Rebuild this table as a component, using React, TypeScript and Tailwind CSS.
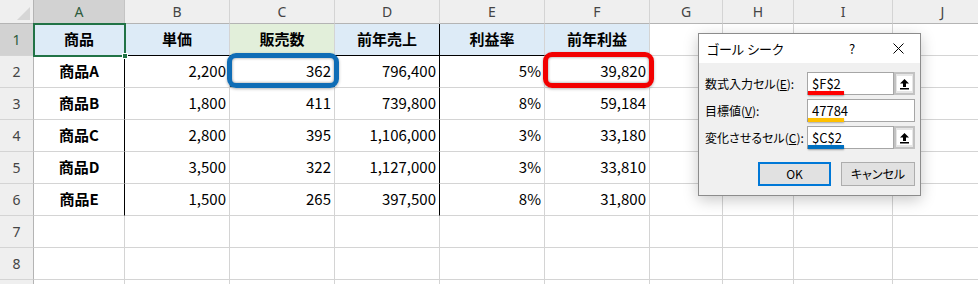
import React from 'react';

const colWidths = ['w-[91px]', 'w-[105px]', 'w-[105px]', 'w-[105px]', 'w-[105px]', 'w-[105px]', 'w-[73px]', 'w-[71px]', 'w-[99px]', 'w-[100px]'];
const colLetters = ['A', 'B', 'C', 'D', 'E', 'F', 'G', 'H', 'I', 'J'];

const headers = ['商品', '単価', '販売数', '前年売上', '利益率', '前年利益'];
const data = [
  ['商品A', '2,200', '362', '796,400', '5%', '39,820'],
  ['商品B', '1,800', '411', '739,800', '8%', '59,184'],
  ['商品C', '2,800', '395', '1,106,000', '3%', '33,180'],
  ['商品D', '3,500', '322', '1,127,000', '3%', '33,810'],
  ['商品E', '1,500', '265', '397,500', '8%', '31,800'],
];

const UploadArrow = () => (
  <svg width="11" height="12" viewBox="0 0 11 12">
    <path d="M5.5 1 L10 5.5 L7 5.5 L7 9 L4 9 L4 5.5 L1 5.5 Z" fill="#000" />
    <rect x="1" y="10" width="9" height="1.5" fill="#000" />
  </svg>
);

const RefInput = ({ value, bar }: { value: string; bar: string }) => (
  <div className="relative flex h-[23px] w-[108px]">
    <div className="flex-1 flex items-center bg-white border border-[#a6a6a6] pl-[4px] text-[13px] text-black">
      {value}
    </div>
    <div className="w-[21px] border-2 border-[#c2c2c2] bg-[#e6e6e6] flex items-center justify-center">
      <div className="w-[15px] h-[15px] bg-white flex items-center justify-center">
        <UploadArrow />
      </div>
    </div>
    <div className={`absolute left-[1px] top-[19px] w-[36px] h-[4px] shadow-[0_1px_2px_rgba(0,0,0,0.35)] ${bar}`} />
  </div>
);

const GoalSeekDialog = () => (
  <div className="absolute left-[698px] top-[33px] w-[223px] h-[163px] border border-[#8c8c8c] bg-[#f0f0f0] shadow-[0_4px_14px_rgba(0,0,0,0.22)] flex flex-col font-['Noto_Sans_CJK_JP',sans-serif] [font-feature-settings:'palt'] text-black">
    {/* title bar */}
    <div className="h-[29px] bg-white flex items-center pl-[8px] text-[13px]">
      <span>ゴール シーク</span>
      <span className="ml-auto w-[14px] text-center text-[13px]">?</span>
      <span className="ml-[32px] mr-[15px] w-[14px] flex items-center justify-center">
        <svg width="11" height="11" viewBox="0 0 11 11">
          <path d="M0.5 0.5 L10.5 10.5 M10.5 0.5 L0.5 10.5" stroke="#000" strokeWidth="1" />
        </svg>
      </span>
    </div>

    <div className="flex flex-col pt-[9px] pl-[6px] pr-[5px] gap-[4px]">
      <div className="flex items-center">
        <span className="w-[102px] text-[12px]">数式入力セル(<span className="underline">E</span>):</span>
        <RefInput value="$F$2" bar="bg-[#ff0000]" />
      </div>
      <div className="flex items-center">
        <span className="w-[102px] text-[12px]">目標値(<span className="underline">V</span>):</span>
        <div className="relative h-[23px] w-[108px] bg-white border border-[#a6a6a6] pl-[4px] flex items-center text-[13px]">
          47784
          <div className="absolute left-0 top-[18px] w-[36px] h-[4px] bg-[#ffc000] shadow-[0_1px_2px_rgba(0,0,0,0.3)]" />
        </div>
      </div>
      <div className="flex items-center">
        <span className="w-[102px] text-[12px]">変化させるセル(<span className="underline">C</span>):</span>
        <RefInput value="$C$2" bar="bg-[#0070c0]" />
      </div>
    </div>

    <div className="flex justify-end gap-[10px] pr-[5px] mt-[13px]">
      <button className="w-[73px] h-[24px] border-2 border-[#0078d7] bg-[#e1e1e1] text-[12px]">OK</button>
      <button className="w-[74px] h-[24px] border border-[#adadad] bg-[#e1e1e1] text-[12px]">キャンセル</button>
    </div>
  </div>
);

export default function App() {
  const rowCount = 9;
  return (
    <div className="relative w-[978px] h-[284px] overflow-hidden bg-white font-['Noto_Sans_CJK_JP',sans-serif] text-black">
      {/* column header row */}
      <div className="flex h-[24px]">
        <div className="w-[34px] shrink-0 bg-[#efefef] border-r border-b border-[#b4b4b4] relative">
          <svg className="absolute right-[3px] bottom-[3px]" width="13" height="13" viewBox="0 0 13 13">
            <polygon points="13,0 13,13 0,13" fill="#d6d6d6" />
          </svg>
        </div>
        {colLetters.map((l, i) => (
          <div
            key={l}
            className={`${colWidths[i]} shrink-0 border-r border-b flex items-center justify-center text-[14px] font-['Noto_Sans',sans-serif] ${
              i === 0 ? 'bg-[#d2d2d2] border-r-[#c4c4c4] border-b-[#9a9a9a] text-[#2d5c3c]' : 'bg-[#efefef] border-r-[#d4d4d4] border-b-[#b4b4b4] text-[#444]'
            }`}
          >
            {l}
          </div>
        ))}
      </div>

      {Array.from({ length: rowCount }).map((_, r) => {
        const rowNo = r + 1;
        return (
          <div key={rowNo} className="flex h-[32px]">
            <div
              className={`w-[34px] shrink-0 border-r border-b border-r-[#b4b4b4] border-b-[#d4d4d4] flex items-center justify-center text-[14px] font-['Noto_Sans',sans-serif] ${
                rowNo === 1 ? 'bg-[#d2d2d2] text-[#2d5c3c]' : 'bg-[#efefef] text-[#444]'
              }`}
            >
              {rowNo < 9 ? rowNo : ''}
            </div>
            {colLetters.map((_, c) => {
              let text = '';
              let bg = '';
              let align = 'justify-end pr-[3px]';
              if (rowNo === 1 && c < 6) {
                text = headers[c];
                bg = c === 2 ? 'bg-[#e2efda]' : 'bg-[#ddebf7]';
                align = 'justify-center font-bold';
              } else if (rowNo >= 2 && rowNo <= 6 && c < 6) {
                text = data[rowNo - 2][c];
                if (c === 0) align = 'justify-center font-bold';
              }
              const inTable = rowNo <= 6;
              const blackRight = inTable && (c === 0 || c === 3);
              const blackBottom = rowNo === 1 && c < 6;
              return (
                <div
                  key={c}
                  className={`${colWidths[c]} shrink-0 border-r border-b flex items-center text-[15px] ${align} ${bg} ${
                    blackRight ? 'border-r-black' : 'border-r-[#d4d4d4]'
                  } ${blackBottom ? 'border-b-black' : 'border-b-[#d4d4d4]'}`}
                >
                  {text}
                </div>
              );
            })}
          </div>
        );
      })}

      {/* active cell A1 */}
      <div className="absolute left-[33px] top-[23px] w-[93px] h-[34px] border-2 border-[#217346]" />
      <div className="absolute left-[122px] top-[53px] w-[6px] h-[6px] bg-[#217346] border border-white" />

      {/* copy marquee on C2 */}
      <div className="absolute left-[230px] top-[85px] w-[105px] border-t-2 border-dashed border-[#1d5f8a]" />

      {/* annotation frames */}
      <div className="absolute left-[227px] top-[53px] w-[112px] h-[35px] rounded-[9px] border-[5px] border-[#0f6db6] shadow-[inset_0_0_3px_rgba(0,0,0,0.45),0_1px_3px_rgba(0,0,0,0.3)]" />
      <div className="absolute left-[543px] top-[52px] w-[111px] h-[36px] rounded-[9px] border-[5px] border-[#f20000] shadow-[inset_0_0_3px_rgba(0,0,0,0.45),0_1px_3px_rgba(0,0,0,0.3)]" />

      <GoalSeekDialog />
    </div>
  );
}
